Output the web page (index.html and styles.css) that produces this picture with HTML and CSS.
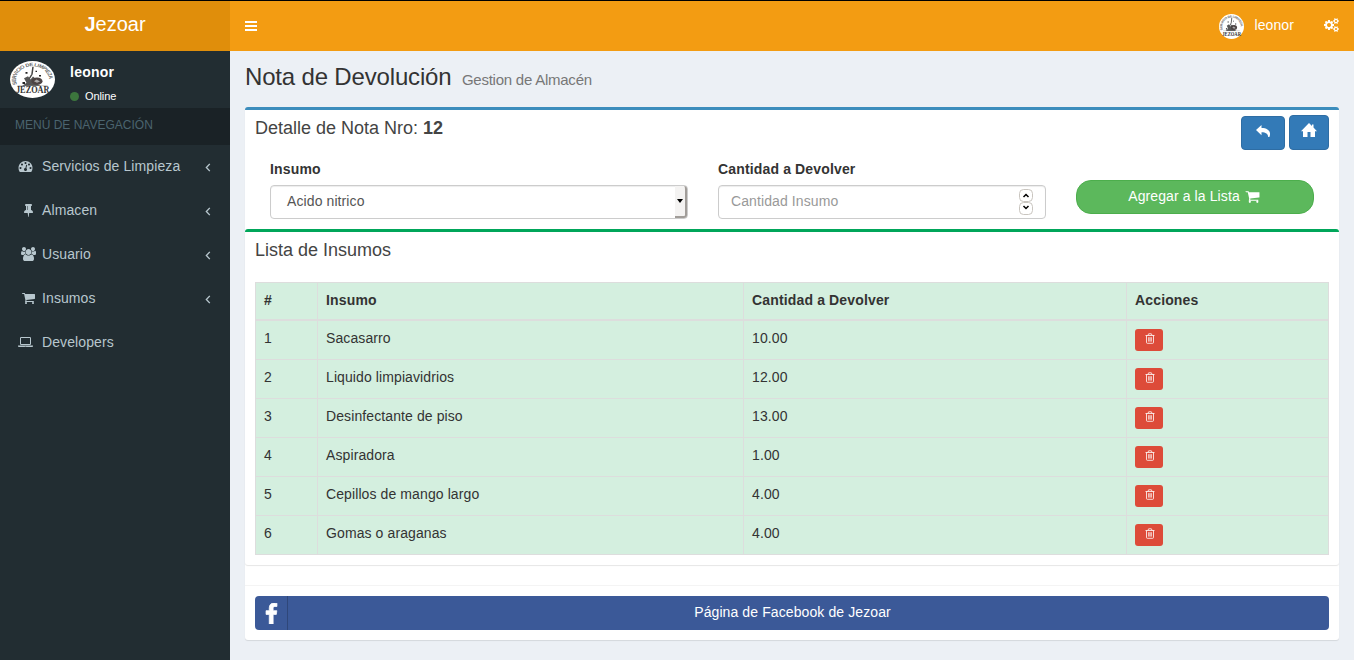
FILE: index.html
```html
<!DOCTYPE html>
<html lang="es">
<head>
<meta charset="utf-8">
<title>Jezoar</title>
<link rel="stylesheet" href="styles.css">
</head>
<body>
<svg class="defs" aria-hidden="true">
  <symbol id="cart" viewBox="0 0 1792 1792"><path d="M704 1536q0 52-38 90t-90 38-90-38-38-90 38-90 90-38 90 38 38 90zm896 0q0 52-38 90t-90 38-90-38-38-90 38-90 90-38 90 38 38 90zm128-1088v512q0 24-16.500 42.500t-40.500 21.500l-1044 122q13 60 13 70 0 16-24 64h920q26 0 45 19t19 45-19 45-45 19h-1024q-26 0-45-19t-19-45q0-11 8-31.500t16-36 21.500-40 15.500-29.500l-177-823h-204q-26 0-45-19t-19-45 19-45 45-19h256q16 0 28.500 6.500t19.500 15.500 13 24.500 8 26 5.500 29.500 4.500 26h1201q26 0 45 19t19 45z"/></symbol>
  <symbol id="gauge" viewBox="0 0 1792 1792"><path d="M384 1152q0-53-37.500-90.500t-90.500-37.500-90.500 37.500-37.500 90.500 37.500 90.500 90.500 37.500 90.500-37.500 37.500-90.500zm192-448q0-53-37.500-90.500t-90.500-37.500-90.500 37.500-37.500 90.500 37.500 90.500 90.500 37.500 90.500-37.500 37.500-90.500zm428 481l101-382q6-26-7.500-48.500t-38.500-29.500-48 6.500-30 39.500l-101 382q-60 5-107 43.500t-63 98.500q-20 77 20 146t117 89 146-20 89-117q16-60-6-117t-72-91zm660-33q0-53-37.500-90.500t-90.500-37.500-90.500 37.500-37.500 90.500 37.500 90.500 90.500 37.500 90.500-37.500 37.500-90.500zm-640-640q0-53-37.500-90.500t-90.500-37.500-90.500 37.500-37.500 90.500 37.500 90.500 90.500 37.500 90.500-37.500 37.500-90.500zm448 192q0-53-37.500-90.500t-90.500-37.500-90.500 37.500-37.500 90.500 37.500 90.500 90.500 37.500 90.500-37.500 37.500-90.500zm320 448q0 261-141 483-19 29-54 29h-1402q-35 0-54-29-141-221-141-483 0-182 71-348t191-286 286-191 348-71 348 71 286 191 191 286 71 348z"/></symbol>
  <symbol id="pin" viewBox="0 0 1792 1792"><path d="M800 864v-448q0-14-9-23t-23-9-23 9-9 23v448q0 14 9 23t23 9 23-9 9-23zm672 352q0 26-19 45t-45 19h-429l-51 483q-2 12-10.500 20.500t-20.500 8.500h-1q-27 0-32-27l-76-485h-404q-26 0-45-19t-19-45q0-123 78.500-221.500t177.500-98.500v-512q-52 0-90-38t-38-90 38-90 90-38h640q52 0 90 38t38 90-38 90-90 38v512q99 0 177.500 98.500t78.500 221.500z"/></symbol>
  <symbol id="users" viewBox="0 0 1920 1792"><path d="M593 896q-162 5-265 128h-134q-82 0-138-40.500t-56-118.500q0-353 124-353 6 0 43.500 21t97.500 42.500 119 21.500q67 0 133-23-5 37-5 66 0 159 93 293zm1071 637q0 120-73 189.500t-194 69.500h-874q-121 0-194-69.500t-73-189.500q0-53 3.500-103.500t14-109 26.500-108.500 43-97.500 62-81 85.500-53.500 111.500-20q10 0 43 21.500t73 48 107 48 135 21.500 135-21.500 107-48 73-48 43-21.500q61 0 111.500 20t85.500 53.500 62 81 43 97.500 26.500 108.500 14 109 3.500 103.500zm-1024-1277q0 106-75 181t-181 75-181-75-75-181 75-181 181-75 181 75 75 181zm704 384q0 159-112.500 271.500t-271.500 112.500-271.500-112.500-112.500-271.500 112.500-271.500 271.500-112.500 271.500 112.500 112.500 271.500zm576 225q0 78-56 118.500t-138 40.500h-134q-103-123-265-128 93-134 93-293 0-29-5-66 66 23 133 23 59 0 119-21.500t97.500-42.500 43.500-21q124 0 124 353zm-128-609q0 106-75 181t-181 75-181-75-75-181 75-181 181-75 181 75 75 181z"/></symbol>
  <symbol id="laptop" viewBox="0 0 1920 1792"><path d="M416 1280q-66 0-113-47t-47-113v-704q0-66 47-113t113-47h1088q66 0 113 47t47 113v704q0 66-47 113t-113 47h-1088zm-32-864v704q0 13 9.500 22.500t22.500 9.500h1088q13 0 22.500-9.500t9.500-22.500v-704q0-13-9.500-22.500t-22.500-9.500h-1088q-13 0-22.500 9.500t-9.500 22.500zm1376 928h160v96q0 40-47 68t-113 28h-1600q-66 0-113-28t-47-68v-96h1760zm-720 96q16 0 16-16t-16-16h-160q-16 0-16 16t16 16h160z"/></symbol>
  <symbol id="facebook" viewBox="479 0 864 1664"><path d="M1343 12v264h-157q-86 0-116 36t-30 108v189h293l-39 296h-254v759h-306v-759h-255v-296h255v-218q0-186 104-288.500t277-102.500q147 0 228 12z" stroke="currentColor" stroke-width="60"/></symbol>
  <symbol id="cogs" viewBox="0 0 1920 1792"><path d="M896 896q0-106-75-181t-181-75-181 75-75 181 75 181 181 75 181-75 75-181zm768 512q0-52-38-90t-90-38-90 38-38 90q0 53 37.500 90.500t90.500 37.500 90.500-37.500 37.500-90.500zm0-1024q0-52-38-90t-90-38-90 38-38 90q0 53 37.500 90.500t90.500 37.500 90.500-37.500 37.500-90.500zm-384 421v185q0 10-7 19.500t-16 10.500l-155 24q-11 35-32 76 34 48 90 115 7 11 7 20 0 12-7 19-23 30-82.500 89.500t-78.500 59.500q-11 0-21-7l-115-90q-37 19-77 31-11 108-23 155-7 24-30 24h-186q-11 0-20-7.500t-10-17.500l-23-153q-34-10-75-31l-118 89q-7 7-20 7-11 0-21-8-144-133-144-160 0-9 7-19 10-14 41-53t47-61q-23-44-35-82l-152-24q-10-1-17-9.500t-7-19.500v-185q0-10 7-19.500t16-10.500l155-24q11-35 32-76-34-48-90-115-7-11-7-20 0-12 7-20 22-30 82-89t79-59q11 0 21 7l115 90q34-18 77-32 11-108 23-154 7-24 30-24h186q11 0 20 7.500t10 17.500l23 153q34 10 75 31l118-89q8-7 20-7 11 0 21 8 144 133 144 160 0 8-7 19-12 16-42 54t-45 60q23 48 34 82l152 23q10 2 17 10.500t7 19.500zm640 533v140q0 16-149 31-12 27-30 52 51 113 51 138 0 4-4 7-122 71-124 71-8 0-46-47t-52-68q-20 2-30 2t-30-2q-14 21-52 68t-46 47q-2 0-124-71-4-3-4-7 0-25 51-138-18-25-30-52-149-15-149-31v-140q0-16 149-31 13-29 30-52-51-113-51-138 0-4 4-7 4-2 35-20t59-34 30-16q8 0 46 46.500t52 67.500q20-2 30-2t30 2q51-71 92-112l6-2q4 0 124 70 4 3 4 7 0 25-51 138 17 23 30 52 149 15 149 31zm0-1024v140q0 16-149 31-12 27-30 52 51 113 51 138 0 4-4 7-122 71-124 71-8 0-46-47t-52-68q-20 2-30 2t-30-2q-14 21-52 68t-46 47q-2 0-124-71-4-3-4-7 0-25 51-138-18-25-30-52-149-15-149-31v-140q0-16 149-31 13-29 30-52-51-113-51-138 0-4 4-7 4-2 35-20t59-34 30-16q8 0 46 46.500t52 67.500q20-2 30-2t30 2q51-71 92-112l6-2q4 0 124 70 4 3 4 7 0 25-51 138 17 23 30 52 149 15 149 31z"/></symbol>
  <symbol id="trash" viewBox="0 0 10 11"><path d="M0.500 2.500h9M1.500 2.500v7q0 .8.800.8h5.400q.8 0 .8-.8v-7M3 2.300l.6-1.500h2.800l.6 1.500M3.700 4.200v4.400M5 4.200v4.400M6.300 4.200v4.400" fill="none" stroke="currentColor" stroke-width=".8"/></symbol>
  <symbol id="angle" viewBox="0 0 6 10"><path d="M5 1L1.200 5 5 9" fill="none" stroke="currentColor" stroke-width="1.500"/></symbol>
  <symbol id="logo" viewBox="0 0 90 90">
    <circle cx="45" cy="45" r="45" fill="#fff"/>
    <path id="arc" d="M14 57A33 33 0 1 1 76 57" fill="none"/>
    <text class="logo-arc"><textPath href="#arc">SERVICIO DE LIMPIEZA</textPath></text>
    <path d="M46 14l-2 18-10 20" fill="none" stroke="#444" stroke-width="3"/>
    <path d="M28 42l8-5 5 8 5-7 6 6-2 10 12 5-5 2H24l9-8z" fill="#555"/>
    <ellipse cx="54" cy="49" rx="11" ry="9" fill="#4c4343"/><path d="M48 49l5-4 7 5-6 3z" fill="#aaa"/>
    <path d="M31 27h4v4h-4zM51 24h3v3h-3zM58 34h4v4h-4zM25 51h5v5h-5z" fill="#222"/>
    <path d="M15 60h60" stroke="#888" stroke-width="1"/>
    <text class="logo-name" x="12" y="79" textLength="67" lengthAdjust="spacingAndGlyphs">JEZOAR</text>
  </symbol>
</svg>
<header class="top">
  <div class="brand"><b>J</b>ezoar</div>
  <nav class="bar">
    <span class="burger"><i></i><i></i><i></i></span>
    <div class="account"><svg class="avatar-sm"><use href="#logo"/></svg><span>leonor</span><svg class="cogs"><use href="#cogs"/></svg></div>
  </nav>
</header>
<div class="shell">
  <aside class="side">
    <div class="user">
      <svg class="avatar" viewBox="0 0 90 90" preserveAspectRatio="none"><use href="#logo" width="90" height="90"/></svg>
      <div><p class="name">leonor</p><p class="status"><i></i>Online</p></div>
    </div>
    <div class="nav-title">MENÚ DE NAVEGACIÓN</div>
    <ul class="menu">
      <li><svg class="ico"><use href="#gauge"/></svg><span>Servicios de Limpieza</span><svg class="angle"><use href="#angle"/></svg></li>
      <li><svg class="ico shift"><use href="#pin"/></svg><span>Almacen</span><svg class="angle"><use href="#angle"/></svg></li>
      <li><svg class="ico shift"><use href="#users"/></svg><span>Usuario</span><svg class="angle"><use href="#angle"/></svg></li>
      <li><svg class="ico shift"><use href="#cart"/></svg><span>Insumos</span><svg class="angle"><use href="#angle"/></svg></li>
      <li><svg class="ico"><use href="#laptop"/></svg><span>Developers</span></li>
    </ul>
  </aside>
  <main class="content">
    <h1>Nota de Devolución <small>Gestion de Almacén</small></h1>
    <section class="box">
      <div class="box-head">
        <h3>Detalle de Nota Nro: <b>12</b></h3>
        <div class="tools">
          <a class="btn back"><svg viewBox="0 0 14 12"><path d="M5.500 0v3C10.500 3 13.500 5 14 8.300c.1 1.300 0 2.500-.6 3.700h-1.200C12 8.600 9.800 7.300 5.500 7.200v3L0 5z"/></svg></a>
          <a class="btn home"><svg viewBox="0 0 16 15"><path d="M8 0l3 3V1.500h1.500v3L16 8.200h-2V14H9.500V9h-3v5H2V8.200H0z"/></svg></a>
        </div>
      </div>
      <div class="form">
        <div class="field"><label>Insumo</label><div class="input select"><span>Acido nitrico</span><i></i></div></div>
        <div class="field"><label>Cantidad a Devolver</label><div class="input number"><span>Cantidad Insumo</span>
          <svg class="spin" viewBox="0 0 14 26"><g fill="#fff" stroke="#c9c5bf"><rect x=".5" y=".5" width="13" height="12" rx="4"/><rect x=".5" y="13.500" width="13" height="12" rx="4"/></g><path d="M4.500 8L7 5.500 9.500 8M4.500 17L7 19.500 9.500 17" fill="none" stroke="#000" stroke-width="1.500"/></svg></div></div>
        <a class="add">Agregar a la Lista <svg><use href="#cart"/></svg></a>
      </div>
      <section class="box list">
        <h3>Lista de Insumos</h3>
        <table>
          <colgroup><col class="c1"><col class="c2"><col class="c3"><col class="c4"></colgroup>
          <thead><tr><th>#</th><th>Insumo</th><th>Cantidad a Devolver</th><th>Acciones</th></tr></thead>
          <tbody>
            <tr><td>1</td><td>Sacasarro</td><td>10.00</td><td><a class="del"><svg><use href="#trash"/></svg></a></td></tr>
            <tr><td>2</td><td>Liquido limpiavidrios</td><td>12.00</td><td><a class="del"><svg><use href="#trash"/></svg></a></td></tr>
            <tr><td>3</td><td>Desinfectante de piso</td><td>13.00</td><td><a class="del"><svg><use href="#trash"/></svg></a></td></tr>
            <tr><td>4</td><td>Aspiradora</td><td>1.00</td><td><a class="del"><svg><use href="#trash"/></svg></a></td></tr>
            <tr><td>5</td><td>Cepillos de mango largo</td><td>4.00</td><td><a class="del"><svg><use href="#trash"/></svg></a></td></tr>
            <tr><td>6</td><td>Gomas o araganas</td><td>4.00</td><td><a class="del"><svg><use href="#trash"/></svg></a></td></tr>
          </tbody>
        </table>
      </section>
      <footer class="box-foot"><a class="fb"><span class="fb-icon"><svg><use href="#facebook"/></svg></span><span class="fb-text">Página de Facebook de Jezoar</span></a></footer>
    </section>
  </main>
</div>
</body>
</html>
```
FILE: styles.css
```css
* { box-sizing: border-box; }
body { margin: 0; height: 660px; overflow: hidden; background: #ecf0f5; color: #333; font: 14px/20px "Liberation Sans", Arial, sans-serif; letter-spacing: .1px; }
h1, h3, p, ul { margin: 0; padding: 0; font-weight: 400; }
svg { display: block; fill: currentColor; }
.defs { position: absolute; width: 0; height: 0; }
.logo-arc { font: bold 11.500px "Liberation Sans", sans-serif; letter-spacing: -.9px; fill: #666; }
.logo-name { font: bold 23px "Liberation Serif", serif; letter-spacing: 0; fill: #333; }

.top { display: flex; height: 51px; border-top: 1px solid #000; color: #fff; }
.brand { width: 230px; background: #e08e0b; text-align: center; font-size: 20px; line-height: 46px; letter-spacing: 0; }
.bar { flex: 1; display: flex; justify-content: space-between; background: #f39c12; padding: 0 15px; }
.burger { display: grid; gap: 2px; align-content: start; padding-top: 20px; }
.burger i { width: 12px; height: 2px; background: #fff; }
.account { display: flex; align-items: flex-start; line-height: 48px; }
.avatar-sm { width: 25px; height: 25px; margin: 13px 10px 0 0; }
.cogs { width: 15px; height: 14px; margin: 17px 0 0 30px; }

.shell { display: flex; height: 609px; }
.side { width: 230px; background: #222d32; color: #b8c7ce; }
.user { display: flex; height: 57px; padding: 10px; color: #fff; }
.avatar { width: 45px; height: 37px; margin-right: 15px; }
.name { font-weight: 700; line-height: 22px; letter-spacing: .25px; }
.status { display: flex; align-items: center; font-size: 11px; line-height: 14px; margin-top: 6px; letter-spacing: -.1px; }
.status i { width: 9px; height: 9px; border-radius: 50%; background: #3c763d; margin-right: 6px; }
.nav-title { height: 37px; padding-left: 15px; background: #1a2226; color: #4b646f; font-size: 12px; line-height: 34px; letter-spacing: 0; }
.menu { list-style: none; }
.menu li { display: flex; align-items: center; height: 44px; padding: 0 19px 2px 18px; }
.ico { width: 15px; height: 14px; }
.ico.shift { width: 15px; margin: 0 -3px 0 3px; }
.menu span { flex: 1; margin-left: 9px; }
.angle { width: 6px; height: 9px; margin-top: 3px; }

.content { flex: 1; padding: 15px; }
h1 { font-size: 24px; line-height: 22px; height: 41px; letter-spacing: -.17px; }
h1 small { font-size: 15px; color: #777; margin-left: 4px; letter-spacing: -.24px; }
h3 { font-size: 18px; line-height: 20px; color: #444; letter-spacing: 0; }
.box { background: #fff; border-top: 3px solid #3c8dbc; border-radius: 3px; box-shadow: 0 1px 1px rgba(0,0,0,.1); }
.box-head { display: flex; justify-content: space-between; height: 47px; padding: 5px 10px 0; }
.box-head h3 { padding-top: 3px; }
.tools { display: flex; align-items: flex-start; gap: 4px; }
.btn { display: flex; justify-content: center; border: 1px solid #2e6da4; border-radius: 4px; background: #337ab7; color: #fff; }
.back { width: 44px; height: 34px; margin-top: 1px; padding-top: 8px; }
.back svg { width: 14px; height: 12px; }
.home { width: 40px; height: 35px; padding-top: 7px; }
.home svg { width: 16px; height: 15px; }
.form { display: grid; grid-template-columns: 418px 328px 238px; gap: 30px; height: 72px; padding: 2px 25px 0; }
label { display: block; height: 26px; font-weight: 700; letter-spacing: .15px; }
.input { display: flex; height: 34px; border: 1px solid #ccc; border-radius: 4px; box-shadow: inset 0 1px 1px rgba(0,0,0,.075); line-height: 31px; color: #555; justify-content: space-between; }
.select { padding-left: 16px; }
.select i { display: flex; align-items: center; justify-content: center; width: 12px; background: #f4f3f2; border: solid #a19d99; border-width: 0 2px 2px 0; border-radius: 0 3px 3px 0; }
.select i::after { content: ""; border: 3px solid transparent; border-top: 4px solid #000; border-bottom: 0; }
.number { color: #999; padding: 0 12px; }
.spin { width: 14px; height: 26px; margin-top: 3px; }
.add { display: flex; justify-content: center; height: 34px; margin-top: 21px; padding-right: 2px; border: 1px solid #4cae4c; border-radius: 15px; background: #5cb85c; color: #fff; line-height: 31px; }
.add svg { width: 15px; height: 15px; margin: 8px 0 0 5px; }

.list { height: 336px; border-top-color: #00a65a; padding: 8px 10px 0; }
.list h3 { height: 42px; }
table { width: 1074px; table-layout: fixed; border-collapse: collapse; background: #d4efdf; }
.c1 { width: 62px; } .c2 { width: 426px; } .c3 { width: 383px; }
th, td { border: 1px solid #ddd; padding: 7px 8px 0; text-align: left; vertical-align: top; }
th { height: 37px; border-bottom-width: 2px; letter-spacing: .15px; }
td { height: 39px; }
tbody tr:first-child td { height: 40px; }
.del { display: flex; justify-content: center; width: 28px; height: 22px; margin-top: 1px; padding: 4px 0 0 1px; background: #dd4b39; border-radius: 3px; color: #fff; }
.del svg { width: 10px; height: 11px; }
.box-foot { margin-top: 20px; border-top: 1px solid #f4f4f4; padding: 10px; }
.fb { display: flex; height: 34px; background: #3b5998; border-radius: 4px; color: #fff; line-height: 32px; }
.fb-icon { width: 33px; border-right: 1px solid #2f477a; padding: 7px 0 0 10px; }
.fb-icon svg { width: 13px; height: 21px; }
.fb-text { flex: 1; text-align: center; padding-right: 32px; }
```
